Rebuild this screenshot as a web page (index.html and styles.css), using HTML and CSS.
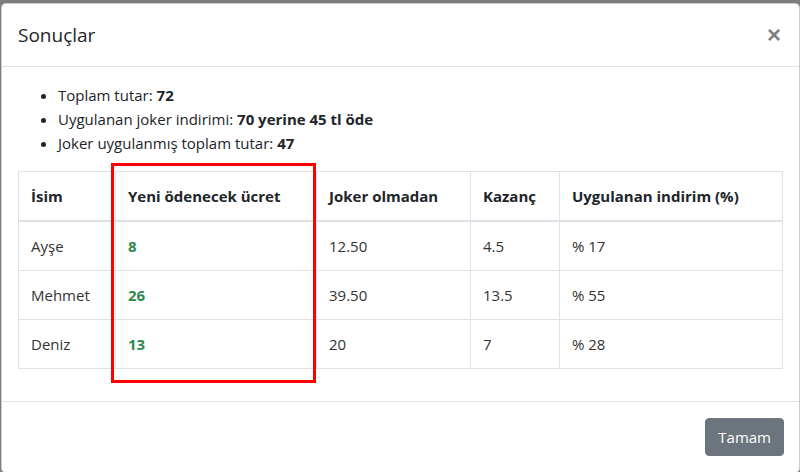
FILE: index.html
```html
<!DOCTYPE html>
<html lang="tr">
<head>
<meta charset="utf-8">
<title>Sonuçlar</title>
<link rel="stylesheet" href="styles.css">
</head>
<body>
<div class="modal">
  <div class="modal-header">
    <h5 class="modal-title">Sonuçlar</h5>
    <button class="close" type="button" aria-label="Close">×</button>
  </div>
  <div class="modal-body">
    <ul class="summary">
      <li>Toplam tutar: <b>72</b></li>
      <li>Uygulanan joker indirimi: <b>70 yerine 45 tl öde</b></li>
      <li>Joker uygulanmış toplam tutar: <b>47</b></li>
    </ul>
    <table class="results">
      <colgroup>
        <col class="c1"><col class="c2"><col class="c3"><col class="c4"><col class="c5">
      </colgroup>
      <thead>
        <tr><th>İsim</th><th>Yeni ödenecek ücret</th><th>Joker olmadan</th><th>Kazanç</th><th>Uygulanan indirim (%)</th></tr>
      </thead>
      <tbody>
        <tr><td>Ayşe</td><td class="pay">8</td><td>12.50</td><td>4.5</td><td>% 17</td></tr>
        <tr><td>Mehmet</td><td class="pay">26</td><td>39.50</td><td>13.5</td><td>% 55</td></tr>
        <tr><td>Deniz</td><td class="pay">13</td><td>20</td><td>7</td><td>% 28</td></tr>
      </tbody>
    </table>
  </div>
  <div class="modal-footer">
    <button class="btn" type="button">Tamam</button>
  </div>
  <div class="highlight"></div>
</div>
</body>
</html>
```

FILE: styles.css
```css
html, body {
  margin: 0;
  padding: 0;
  height: 100%;
  overflow: hidden;
}
body {
  background: #7d7d7d;
  font-family: "Open Sans", "Noto Sans", sans-serif;
  font-size: 15px;
  color: #212529;
}
.modal {
  position: relative;
  margin: 3px 0 0 1px;
  width: 799px;
  background: #fff;
  border: 1px solid rgba(0, 0, 0, .2);
  border-radius: 5px;
  box-sizing: border-box;
}
.modal-header {
  display: flex;
  align-items: flex-start;
  padding: 16px;
  border-bottom: 1px solid #dee2e6;
}
.modal-title {
  margin: 0;
  font-size: 19px;
  line-height: 30px;
  font-weight: 400;
  color: #212529;
}
.close {
  margin: -16px -16px -16px auto;
  padding: 16px 18px;
  background: none;
  border: 0;
  font-family: "Liberation Sans", Arial, sans-serif;
  font-size: 24px;
  font-weight: 700;
  line-height: 30px;
  color: #000;
  opacity: .5;
}
.modal-body {
  padding: 16px;
}
.summary {
  margin: 0 0 16px;
  padding-left: 40px;
  line-height: 24px;
}
.summary b {
  font-weight: 700;
}
.results {
  width: 100%;
  margin-bottom: 16px;
  border-collapse: collapse;
  table-layout: fixed;
  line-height: 24px;
}
.c1 { width: 97px; }
.c2 { width: 201px; }
.c3 { width: 154px; }
.c4 { width: 89px; }
.c5 { width: auto; }
.results th, .results td {
  border: 1px solid #dee2e6;
  padding: 12px;
  text-align: left;
  vertical-align: top;
}
.results th {
  font-weight: 700;
  border-bottom-width: 2px;
}
.results td {
  color: #333;
}
.results td.pay {
  color: #2c8a50;
  font-weight: 700;
}
.modal-footer {
  display: flex;
  justify-content: flex-end;
  padding: 16px 15px 16px 16px;
  border-top: 1px solid #dee2e6;
}
.btn {
  font-family: inherit;
  font-size: 15px;
  line-height: 24px;
  padding: 6px 12px;
  color: #fff;
  background: #6c757d;
  border: 1px solid #6c757d;
  border-radius: 4px;
}
.highlight {
  position: absolute;
  left: 109px;
  top: 159px;
  width: 199px;
  height: 214px;
  border: 3px solid #ff0000;
}
```
